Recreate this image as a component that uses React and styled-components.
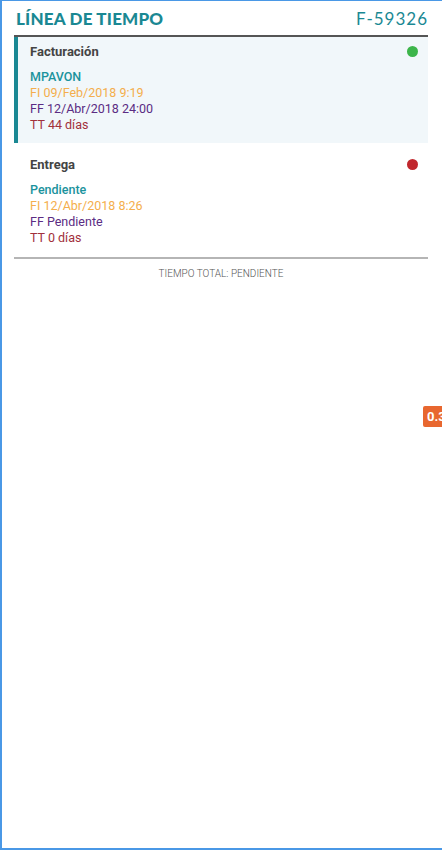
import styled, { createGlobalStyle } from 'styled-components';

const GlobalStyle = createGlobalStyle`
  html, body {
    margin: 0;
    padding: 0;
    background: #fff;
  }
  body {
    font-family: Roboto, 'Liberation Sans', sans-serif;
    overflow: hidden;
  }
`;

const Frame = styled.div`
  position: relative;
  box-sizing: border-box;
  height: 850px;
  border-top: 1px solid #4a98e6;
  border-left: 2px solid #4a98e6;
  border-bottom: 2px solid #4a98e6;
  padding: 0 14px 0 12px;
`;

const Header = styled.div`
  display: flex;
  align-items: center;
  justify-content: space-between;
  height: 34px;
  padding: 0 0 0 2px;
  border-bottom: 2px solid #555;
`;

const Title = styled.h1`
  margin: 0;
  font-family: Lato, 'DejaVu Sans', sans-serif;
  font-weight: 900;
  font-size: 17px;
  letter-spacing: 0.2px;
  color: #1a8893;
`;

const Folio = styled.span`
  font-family: Lato, 'DejaVu Sans', sans-serif;
  font-weight: 400;
  font-size: 17px;
  letter-spacing: 1px;
  color: #1a8893;
`;

const Step = styled.div`
  display: flex;
  flex-direction: column;
  padding: ${(p) => (p.$active ? '5px 10px 10px 12px' : '12px 10px 11px 16px')};
  background: ${(p) => (p.$active ? '#f1f7fa' : 'transparent')};
  border-left: ${(p) => (p.$active ? '4px solid #1a8893' : 'none')};
`;

const StepHead = styled.div`
  display: flex;
  align-items: center;
  justify-content: space-between;
  height: 18px;
  margin-bottom: 9px;
`;

const StepName = styled.span`
  font-size: 13px;
  font-weight: 700;
  color: #444;
`;

const Dot = styled.span`
  width: 11px;
  height: 11px;
  border-radius: 50%;
  background: ${(p) => p.$color};
`;

const Line = styled.div`
  font-size: 12.5px;
  line-height: 16px;
  color: ${(p) => p.$color};
  font-weight: ${(p) => (p.$bold ? 500 : 400)};
`;

const Total = styled.div`
  border-top: 2px solid #b5b5b5;
  padding-top: 9px;
  text-align: center;
  font-size: 10px;
  font-weight: 300;
  color: #555;
`;

const Badge = styled.div`
  position: absolute;
  top: 405px;
  left: 421px;
  padding: 3px 4px;
  border-radius: 2px;
  background: #e8672f;
  color: #fff;
  font-size: 13px;
  font-weight: 700;
`;

const steps = [
  {
    name: 'Facturación',
    active: true,
    dot: '#3cb54a',
    who: 'MPAVON',
    fi: '09/Feb/2018 9:19',
    ff: '12/Abr/2018 24:00',
    tt: '44 días',
  },
  {
    name: 'Entrega',
    active: false,
    dot: '#c1272d',
    who: 'Pendiente',
    fi: '12/Abr/2018 8:26',
    ff: 'Pendiente',
    tt: '0 días',
  },
];

export default function App() {
  return (
    <>
      <GlobalStyle />
      <Frame>
        <Header>
          <Title>LÍNEA DE TIEMPO</Title>
          <Folio>F-59326</Folio>
        </Header>
        {steps.map((s) => (
          <Step key={s.name} $active={s.active}>
            <StepHead>
              <StepName>{s.name}</StepName>
              <Dot $color={s.dot} />
            </StepHead>
            <Line $color='#1b939d' $bold>{s.who}</Line>
            <Line $color='#f4ae4c'>FI {s.fi}</Line>
            <Line $color='#5b2c83'>FF {s.ff}</Line>
            <Line $color='#a1303b'>TT {s.tt}</Line>
          </Step>
        ))}
        <Total>TIEMPO TOTAL: PENDIENTE</Total>
        <Badge>0.3</Badge>
      </Frame>
    </>
  );
}
